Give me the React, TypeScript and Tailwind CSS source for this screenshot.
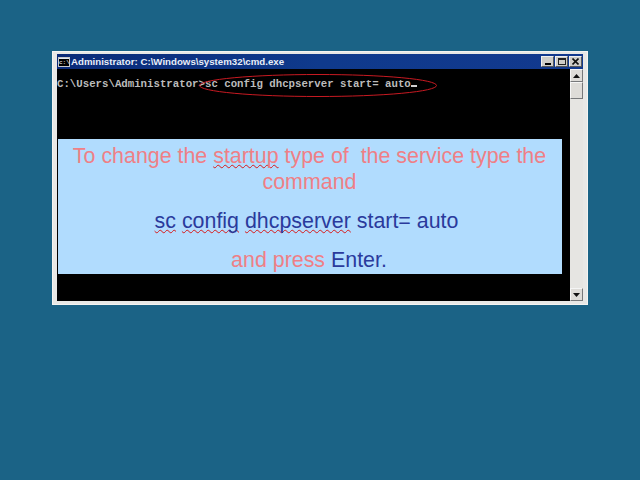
function CmdIcon() {
  return (
    <div className="w-[12px] h-[10px] bg-[#d8d8d8] border border-[#c8c8c8] flex flex-col">
      <div className="h-[1px] bg-[#dfe8f5]" />
      <div className="flex-1 bg-black text-[6px] leading-[7px] text-white overflow-hidden font-['Liberation_Mono',monospace]">
        c:\
      </div>
    </div>
  );
}

function WinButton({ children }: { children: React.ReactNode }) {
  return (
    <div className="w-[13px] h-[11px] bg-[#cfcdc8] border border-t-[#f0f0f0] border-l-[#f0f0f0] border-r-[#55585c] border-b-[#55585c] flex items-center justify-center">
      {children}
    </div>
  );
}

function ScrollArrow({ down }: { down?: boolean }) {
  return (
    <div className="h-[13px] w-[13px] bg-[#dedcd8] border border-t-[#f5f5f5] border-l-[#f5f5f5] border-r-[#77787a] border-b-[#77787a] flex items-center justify-center">
      <svg width="7" height="4" viewBox="0 0 7 4">
        <path d={down ? "M0 0h7L3.5 4z" : "M0 4h7L3.5 0z"} fill="#111" />
      </svg>
    </div>
  );
}

function Squiggle({ children }: { children: React.ReactNode }) {
  return (
    <span className="underline decoration-wavy decoration-[#d81818] decoration-1 underline-offset-1 [text-decoration-skip-ink:none]">
      {children}
    </span>
  );
}

export default function App() {
  return (
    <div className="w-[640px] h-[480px] bg-[#1b6386] pt-[51px] pl-[52px] overflow-hidden font-['Liberation_Sans',Arial,sans-serif]">
      <div className="w-[536px] h-[254px] bg-[#e8e8e6] border border-[#f4f4f2] px-[4px] pt-[2px] pb-[3px] flex flex-col">
        <div className="h-[15px] bg-gradient-to-r from-[#0a2a78] via-[#0f3a8c] to-[#12398e] flex items-center pl-[1px] pr-[1px] shrink-0">
          <CmdIcon />
          <span className="ml-[1px] text-[9.7px] leading-[12px] font-bold text-[#e8eef8] whitespace-nowrap">
            Administrator: C:\Windows\system32\cmd.exe
          </span>
          <div className="ml-auto flex gap-[1px]">
            <WinButton>
              <div className="w-[6px] h-[2px] bg-black mt-[5px]" />
            </WinButton>
            <WinButton>
              <div className="w-[8px] h-[7px] border border-[#222] border-t-2" />
            </WinButton>
            <WinButton>
              <svg width="7" height="7" viewBox="0 0 7 7">
                <path d="M0.5 0.5l6 6M6.5 0.5l-6 6" stroke="#111" strokeWidth="1.6" />
              </svg>
            </WinButton>
          </div>
        </div>
        <div className="flex-1 flex min-h-0">
          <div className="relative flex-1 bg-black pt-[9px]">
            <div className="text-[10.72px] leading-[12px] font-bold text-[#bcbcbc] whitespace-pre font-['Liberation_Mono',monospace]">
              {"C:\\Users\\Administrator>sc config dhcpserver start= auto"}
              <span className="inline-block w-[6px] h-[2px] bg-[#d0d0d0] align-baseline" />
            </div>
            <svg className="absolute left-[141px] top-[2px]" width="242" height="30" viewBox="0 0 242 30" fill="none">
              <ellipse cx="120" cy="14.5" rx="118.5" ry="11" stroke="#c81a22" strokeWidth="1" />
            </svg>
            <div className="absolute left-[1px] top-[70px] w-[504px] h-[135px] bg-[#b1dcfe] flex flex-col items-center pt-[4px] text-[21.4px] leading-[26px] text-[#ef7f86] text-center">
              <div className="w-[490px] pr-[1px]">
                To change the <Squiggle>startup</Squiggle> type of&nbsp; the service type the command
              </div>
              <div className="mt-[13px] pr-[7px] text-[#2a3a9c]">
                <Squiggle>sc</Squiggle> <Squiggle>config</Squiggle> <Squiggle>dhcpserver</Squiggle> start= auto
              </div>
              <div className="mt-[13px] pr-[2px]">
                and press <span className="text-[#2a3a9c]">Enter.</span>
              </div>
            </div>
          </div>
          <div className="w-[13px] bg-[#e6e5e2] flex flex-col">
            <ScrollArrow />
            <div className="h-[17px] bg-[#dedcd8] border border-t-[#f5f5f5] border-l-[#f5f5f5] border-r-[#77787a] border-b-[#77787a]" />
            <div className="flex-1" />
            <ScrollArrow down />
          </div>
        </div>
      </div>
    </div>
  );
}
